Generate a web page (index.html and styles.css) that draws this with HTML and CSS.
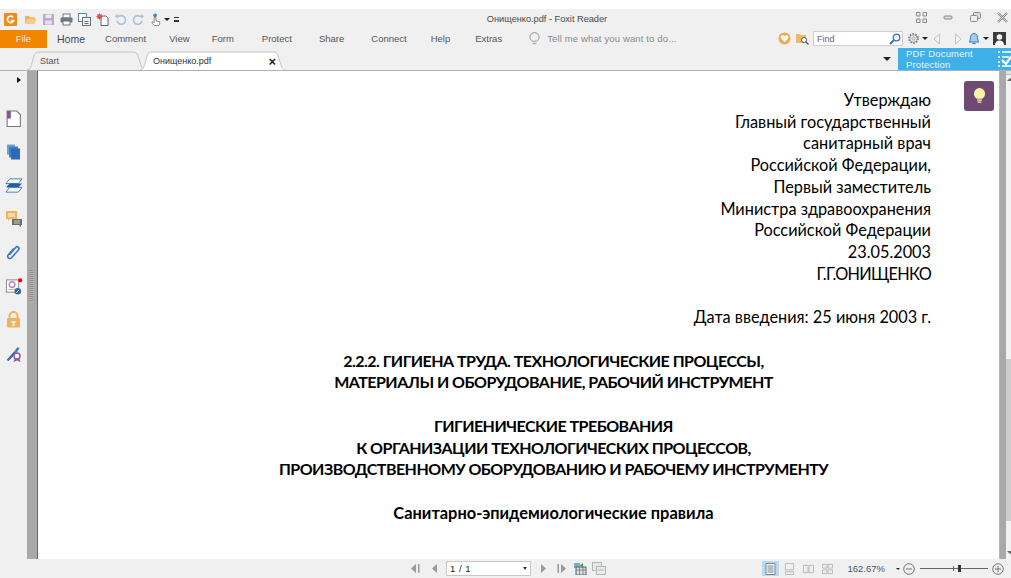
FILE: index.html
```html
<!DOCTYPE html>
<html lang="ru">
<head>
<meta charset="utf-8">
<title>Онищенко.pdf - Foxit Reader</title>
<link rel="stylesheet" href="styles.css">
</head>
<body>
<div class="app">
  <header class="chrome">
    <div class="titlebar">
      <div class="quick">
        <svg class="qi logo" viewBox="0 0 13 13"><rect width="13" height="13" rx="1" fill="#f08a1d"/><path d="M9 4.200A3.200 3.200 0 1 0 9.600 7.600H6.800" fill="none" stroke="#fff" stroke-width="1.700"/></svg>
        <svg class="qi" viewBox="0 0 13 13"><path d="M1 3h4l1 1.500h5V6H3.500L1 11z" fill="#e9b25e"/><path d="M1 11l2.500-5H13l-2.500 5z" fill="#f6cd8a"/></svg>
        <svg class="qi" viewBox="0 0 13 13"><path d="M1 1h11v11H1z" fill="#bfa6cf"/><rect x="3.500" y="1.500" width="6" height="3.500" fill="#efe8f3"/><rect x="3" y="7.500" width="7" height="4" fill="#e6dcec"/></svg>
        <svg class="qi" viewBox="0 0 13 13"><rect x="3" y="1" width="7" height="4" fill="#fff" stroke="#667" stroke-width=".9"/><rect x=".5" y="4.500" width="12" height="5" rx="1" fill="#6d7a88"/><rect x="3" y="8" width="7" height="4" fill="#fff" stroke="#667" stroke-width=".9"/></svg>
        <svg class="qi" viewBox="0 0 13 13"><rect x=".5" y=".5" width="8" height="8" fill="#fff" stroke="#5a87b5"/><rect x="4.500" y="4.500" width="8" height="8" fill="#eef2f6" stroke="#66707a"/><path d="M6.500 8.500h4M6.500 10.500h4" stroke="#66707a"/></svg>
        <svg class="qi" viewBox="0 0 13 13"><path d="M5 3h5l2 2v7.500H5z" fill="#fff" stroke="#555" stroke-width=".9"/><circle cx="3.500" cy="3.500" r="2.300" fill="#d9342b"/><path d="M3.500 0v7M0 3.500h7M1 1l5 5M6 1L1 6" stroke="#e0584f" stroke-width=".6"/></svg>
        <svg class="qi" viewBox="0 0 13 13"><path d="M3 7.500A4.300 4.300 0 1 0 5 3.300H1.500" fill="none" stroke="#a9c3de" stroke-width="1.700"/><path d="M3.500 .8L1 3.300l2.500 2.500z" fill="#a9c3de"/></svg>
        <svg class="qi" viewBox="0 0 13 13"><path d="M10 7.500A4.300 4.300 0 1 1 8 3.300h3.500" fill="none" stroke="#a9c3de" stroke-width="1.700"/><path d="M9.500 .8L12 3.300 9.500 5.800z" fill="#a9c3de"/></svg>
        <svg class="qi" viewBox="0 0 13 14"><circle cx="5" cy="2.500" r="2" fill="#4b83bd"/><path d="M4 5h2v3.500l4 1v2.500l-1 1.500H4L1.500 10l1.500-.5L4 10.500z" fill="#fff" stroke="#666" stroke-width=".8"/></svg>
        <span class="caret hand-caret"></span>
        <span class="more"></span>
      </div>
      <div class="doc-title">Онищенко.pdf - Foxit Reader</div>
      <div class="win-ctl">
        <svg class="wi" viewBox="0 0 11 11"><path d="M.5.500h3.500v3.500H.5zM7 .5h3.500v3.500H7zM.5 7h3.500v3.500H.5zM7 7h3.500v3.500H7z" fill="#eee" stroke="#888"/></svg>
        <svg class="wi" viewBox="0 0 11 11"><rect x="1" y="4" width="8" height="3" rx="1" fill="#ddd" stroke="#888"/></svg>
        <svg class="wi" viewBox="0 0 11 11"><rect x="3.500" y=".5" width="7" height="6" rx="1" fill="#ddd" stroke="#888"/><rect x=".5" y="3.500" width="7" height="6" rx="1" fill="#eee" stroke="#888"/></svg>
        <svg class="wi" viewBox="0 0 11 11"><path d="M1 1l9 9M10 1l-9 9" stroke="#888" stroke-width="2.200"/><path d="M1 1l9 9M10 1l-9 9" stroke="#eee" stroke-width=".7"/></svg>
      </div>
    </div>
    <div class="ribbon">
      <nav class="menu">
        <span class="file">File</span>
        <span class="m home">Home</span>
        <span class="m comment">Comment</span>
        <span class="m view">View</span>
        <span class="m form">Form</span>
        <span class="m protect">Protect</span>
        <span class="m share">Share</span>
        <span class="m connect">Connect</span>
        <span class="m help">Help</span>
        <span class="m extras">Extras</span>
        <span class="tell">
          <svg class="bulb" viewBox="0 0 12 15"><path d="M3.500 10C2 8.500 1 7.500 1 5.500a5 5 0 0 1 10 0c0 2-1 3-2.500 4.500zM4 12.500h4" fill="none" stroke="#8d8d8d"/></svg>
          Tell me what you want to do...
        </span>
      </nav>
      <div class="tools">
        <svg class="ti heart" viewBox="0 0 13 13"><circle cx="6.500" cy="6.500" r="6" fill="#eeaa55"/><path d="M6.500 10L3 6.500a2 2 0 0 1 3.500-2.300A2 2 0 0 1 10 6.500z" fill="#fff"/></svg>
        <svg class="ti" viewBox="0 0 13 13"><path d="M0 2h4l1 1h5v8H0z" fill="#edb96b"/><circle cx="8" cy="8" r="2.500" fill="#fff" stroke="#555"/><path d="M10 10l2.500 2.500" stroke="#555" stroke-width="1.300"/></svg>
        <div class="find">
          <span>Find</span>
          <svg class="lens" viewBox="0 0 12 12"><circle cx="7.500" cy="4.500" r="3.300" fill="none" stroke="#2f76bd" stroke-width="1.300"/><path d="M5 7L1 11" stroke="#2f76bd" stroke-width="1.800"/></svg>
        </div>
        <svg class="ti gear" viewBox="0 0 13 13"><circle cx="6.500" cy="6.500" r="4.500" fill="none" stroke="#808080" stroke-width="1.800" stroke-dasharray="1.600 1.200"/><circle cx="6.500" cy="6.500" r="3.700" fill="none" stroke="#909090" stroke-width=".7"/><circle cx="6.500" cy="6.500" r="1.600" fill="none" stroke="#909090" stroke-width=".8"/></svg>
        <span class="caret"></span>
        <svg class="ti back" viewBox="0 0 8 12"><path d="M6.500 1L1 6l5.500 5z" fill="#f3f3f3" stroke="#c2c2c2"/></svg>
        <svg class="ti fwd" viewBox="0 0 8 12"><path d="M1.500 1L7 6l-5.500 5z" fill="#f3f3f3" stroke="#c2c2c2"/></svg>
        <svg class="ti bell" viewBox="0 0 12 13"><path d="M1 10c1-1 1.500-2 1.500-4.500C2.500 3 4 1.500 6 1.500S9.500 3 9.500 5.500C9.500 8 10 9 11 10z" fill="#a6cdf0" stroke="#2f7fc8"/><path d="M4.500 11.500h3" stroke="#2f7fc8" stroke-width="1.200"/></svg>
        <span class="caret"></span>
        <svg class="ti user" viewBox="0 0 13 13"><rect width="13" height="13" fill="#3a3a3a"/><circle cx="6.500" cy="5" r="2.800" fill="#fff"/><path d="M2 13c0-3 2-4.500 4.500-4.500S11 10 11 13z" fill="#fff"/></svg>
      </div>
    </div>
    <div class="tabrow">
      <div class="tabs">
        <div class="tab start">
          <svg class="tab-shape" viewBox="0 0 118 18" preserveAspectRatio="none"><path d="M0 18C3 18 4 15 5 11L7 4C8 1 9 0 12 0H106C109 0 110 1 111 4L114 13C115 16 116 18 118 18" fill="#f0f0f0" stroke="#c4c4c4"/></svg>
          <span>Start</span>
        </div>
        <div class="tab active">
          <svg class="tab-shape" viewBox="0 0 145 18" preserveAspectRatio="none"><path d="M0 18C3 18 4 15 5 11L7 4C8 1 9 0 12 0H133C136 0 137 1 138 4L141 13C142 16 143 18 145 18" fill="#fff" stroke="#c4c4c4"/></svg>
          <span>Онищенко.pdf</span><b class="close">×</b>
        </div>
      </div>
      <div class="tab-right">
        <span class="tab-list"></span>
        <div class="promo">
          <span>PDF Document<br>Protection</span>
          <svg class="promo-ic" viewBox="0 0 17 18"><path d="M1 2h2M5 2h11M1 7h2M1 12h2M1 16h2M5 16h11" stroke="#fff" stroke-width="1.500"/><path d="M5 7h7M5 12h3" stroke="#fff" stroke-width="1.500"/><path d="M5 10l4 4 7-10" fill="none" stroke="#fff" stroke-width="2.200"/></svg>
        </div>
      </div>
    </div>
  </header>

  <div class="workspace">
    <aside class="sidebar">
      <span class="expand"></span>
      <svg class="si" viewBox="0 0 14 16"><path d="M1 1h9l3.500 3.500V15.500H1z" fill="#fff" stroke="#777"/><rect x="1" y="1" width="3.500" height="7" fill="#8a4fa3"/></svg>
      <svg class="si" viewBox="0 0 15 16"><rect x="1" y="1" width="8" height="10" fill="#6ea1d8"/><rect x="3" y="3" width="9" height="11" fill="#3f80c8"/><rect x="5" y="5" width="9" height="11" fill="#2a6cb5"/></svg>
      <svg class="si wide" viewBox="0 0 19 16"><path d="M5 1h13l-4 5H1z" fill="#fff" stroke="#3b78bd"/><path d="M5 6h13l-4 4H1z" fill="#1f5fa8"/><path d="M5 10h13l-4 5H1z" fill="#fff" stroke="#3b78bd"/></svg>
      <svg class="si wide" viewBox="0 0 18 17"><path d="M1 1h11v8H5l-2 2V9H1z" fill="#efb45c"/><path d="M3 4h7M3 6h7" stroke="#fff"/><path d="M7 9h10v6h-1v2l-2-2H7z" fill="#6d6d6d"/><path d="M9 11h6M9 13h6" stroke="#ccc"/></svg>
      <svg class="si" viewBox="0 0 16 17"><path d="M4 10.500L10.500 3c1.500-1.800 4.500.5 3 2.500L6 14c-1.500 1.800-5 .5-4-2.500L8.500 4" fill="none" stroke="#3b7bc0" stroke-width="1.700"/></svg>
      <svg class="si wide" viewBox="0 0 18 18"><rect x="1" y="2" width="13" height="13" fill="#fff" stroke="#888"/><circle cx="7" cy="7" r="3" fill="none" stroke="#a98bb9" stroke-width="1.500"/><path d="M3 12h8" stroke="#aaa"/><circle cx="15.500" cy="2.500" r="2.200" fill="#f00"/><circle cx="13" cy="14" r="3.500" fill="#2e6ca8"/><path d="M11.500 15.500l3-3" stroke="#fff"/></svg>
      <svg class="si" viewBox="0 0 14 17"><path d="M3 8V5a4 4 0 0 1 8 0v3" fill="none" stroke="#eeb35f" stroke-width="2"/><rect x="0.500" y="7" width="13" height="9.500" rx="1" fill="#eeb35f"/><path d="M5 11h4M7 11v4" stroke="#fff" stroke-width="1.600"/></svg>
      <svg class="si wide" viewBox="0 0 17 17"><path d="M1 15L9 6l2 2-8 8z" fill="#2c6fb3"/><path d="M9 6l3-4 2 1.500-3 4.500" fill="#3e83c6"/><circle cx="11.500" cy="11" r="3" fill="#fff" stroke="#94559f" stroke-width="1.500"/><path d="M9 14l-1 3 3.500-1.500L15 17l-1-3" fill="#94559f"/></svg>
    </aside>
    <div class="gutter left"><span class="grip"></span></div>
    <main class="page">
      <div class="approval">
        <p>Утверждаю</p>
        <p>Главный государственный</p>
        <p>санитарный врач</p>
        <p>Российской Федерации,</p>
        <p>Первый заместитель</p>
        <p>Министра здравоохранения</p>
        <p>Российской Федерации</p>
        <p>23.05.2003</p>
        <p class="caps">Г.Г.ОНИЩЕНКО</p>
        <p class="spacer">&nbsp;</p>
        <p>Дата введения: 25 июня 2003 г.</p>
      </div>
      <div class="heading">
        <p>2.2.2. ГИГИЕНА ТРУДА. ТЕХНОЛОГИЧЕСКИЕ ПРОЦЕССЫ,</p>
        <p>МАТЕРИАЛЫ И ОБОРУДОВАНИЕ, РАБОЧИЙ ИНСТРУМЕНТ</p>
        <p class="spacer">&nbsp;</p>
        <p>ГИГИЕНИЧЕСКИЕ ТРЕБОВАНИЯ</p>
        <p>К ОРГАНИЗАЦИИ ТЕХНОЛОГИЧЕСКИХ ПРОЦЕССОВ,</p>
        <p>ПРОИЗВОДСТВЕННОМУ ОБОРУДОВАНИЮ И РАБОЧЕМУ ИНСТРУМЕНТУ</p>
        <p class="spacer">&nbsp;</p>
        <p class="subject">Санитарно-эпидемиологические правила</p>
      </div>
      <div class="tip">
        <svg viewBox="0 0 14 18"><path d="M4 12C2.500 10.500 1 9 1 6.500a6 6 0 0 1 12 0C13 9 11.500 10.500 10 12z" fill="#fdf3a8"/><path d="M4.500 13.500h5M5 15.500h4" stroke="#fdf3a8" stroke-width="1.400"/></svg>
      </div>
    </main>
    <div class="gutter right"></div>
    <div class="scrollbar">
      <span class="sb-btn"></span>
      <span class="sb-up"></span>
      <span class="sb-thumb"></span>
      <span class="sb-down"></span>
    </div>
  </div>

  <footer class="status">
    <div class="pager">
      <svg class="pi" viewBox="0 0 12 11"><path d="M6 1L1 5.500 6 10zM8 1h1.500v9H8z" fill="#9a9a9a"/></svg>
      <svg class="pi" viewBox="0 0 12 11"><path d="M8 1L3 5.500 8 10z" fill="#9a9a9a"/></svg>
      <div class="pagebox"><span>1 / 1</span><i class="box-caret"></i></div>
      <svg class="pi" viewBox="0 0 12 11"><path d="M4 1l5 4.500L4 10z" fill="#9a9a9a"/></svg>
      <svg class="pi" viewBox="0 0 12 11"><path d="M1.500 1H3v9H1.500zM5 1l5 4.500L5 10z" fill="#9a9a9a"/></svg>
      <svg class="pi big" viewBox="0 0 14 13"><rect x="1" y="1" width="6" height="5" fill="#7ea8d0"/><rect x="3" y="5" width="10" height="8" fill="#d5d9dd" stroke="#5a6570"/><path d="M3 8h10M6.500 5v8M10 5v8" stroke="#5a6570" stroke-width=".6"/><path d="M10 1L7 3.500 10 6z" fill="#3a9a5a"/></svg>
      <svg class="pi big" viewBox="0 0 14 13"><rect x=".5" y=".5" width="9" height="8" fill="#e8e8e8" stroke="#b5b5b5"/><rect x="4.500" y="4.500" width="9" height="8" fill="#e4ecec" stroke="#b5b5b5"/><path d="M6 8h6" stroke="#8fc4a4"/></svg>
    </div>
    <div class="viewer">
      <span class="vm on"><svg viewBox="0 0 10 12"><path d="M.5.500h9v11h-9zM2 3h6M2 5h6M2 7h6M2 9h6" fill="#f4f6f8" stroke="#7f8790"/></svg></span>
      <span class="vm"><svg viewBox="0 0 10 13"><path d="M.5.500h9v7h-9zM.5 9.500h9v3h-9z" fill="none" stroke="#b6b6b6"/></svg></span>
      <span class="vm"><svg viewBox="0 0 12 11"><path d="M.5 1.500h5v8h-5zM6.500 1.500h5v8h-5z" fill="#eee" stroke="#b6b6b6"/></svg></span>
      <span class="vm"><svg viewBox="0 0 12 13"><path d="M.5 1.500h5v4h-5zM6.500 1.500h5v4h-5zM.5 7.500h5v4h-5zM6.500 7.500h5v4h-5z" fill="none" stroke="#b6b6b6"/></svg></span>
      <span class="zoom-val">162.67%</span>
      <span class="caret small"></span>
      <svg class="zb" viewBox="0 0 12 12"><circle cx="6" cy="6" r="5.300" fill="none" stroke="#777"/><path d="M3 6h6" stroke="#777"/></svg>
      <div class="slider"><i class="tick"></i><i class="knob"></i></div>
      <svg class="zb" viewBox="0 0 12 12"><circle cx="6" cy="6" r="5.300" fill="none" stroke="#777"/><path d="M3 6h6M6 3v6" stroke="#777"/></svg>
    </div>
  </footer>
</div>
</body>
</html>
```
FILE: styles.css
```css
* { box-sizing: border-box; }

html, body { margin: 0; height: 100%; background: #fff; overflow: hidden; }

body { font-family: "Open Sans", "Noto Sans", sans-serif; color: #000; }

.app {
  display: flex;
  flex-direction: column;
  height: 578px;
  padding-top: 9px;
}

/* ---------- window chrome ---------- */
.chrome {
  flex: none;
  height: 62px;
  background: #f0f0f0;
  border-bottom: 1px solid #b0b0b0;
  display: flex;
  flex-direction: column;
}

.titlebar {
  flex: none;
  height: 20px;
  display: grid;
  grid-template-columns: 1fr auto 1fr;
  align-items: center;
  padding-left: 4px;
}

.quick { display: flex; align-items: center; gap: 5px; }
.qi { width: 13px; height: 13px; flex: none; }
.logo { margin-right: 2px; }
.caret {
  width: 0; height: 0; flex: none;
  border-left: 3px solid transparent;
  border-right: 3px solid transparent;
  border-top: 3px solid #222;
}
.hand-caret { margin-left: -4px; }
.more {
  width: 5px; height: 5px; margin-left: -1px;
  border-top: 1px solid #333;
  background: linear-gradient(#333, #333) center 2px / 5px 2px no-repeat;
}

.doc-title {
  font-family: "Liberation Sans", sans-serif;
  font-size: 9.200px;
  color: #4a4a4a;
  margin: -1px 0 0 79px;
}

.win-ctl { display: flex; justify-content: flex-end; gap: 16px; padding-right: 3px; margin-top: -4px; }
.wi { width: 11px; height: 11px; flex: none; }

.ribbon {
  flex: none;
  height: 19px;
  display: flex;
  justify-content: space-between;
  position: relative;
}

.menu {
  display: flex;
  align-items: center;
  font-family: "Liberation Sans", sans-serif;
  font-size: 9.500px;
  color: #555;
}

.file {
  width: 47px; height: 18px;
  background: #f28500;
  color: #fbe5c8;
  display: flex; align-items: center; justify-content: center;
}
.m { flex: none; }
.home { margin-left: 10px; font-size: 10.500px; color: #3b4a5a; }
.comment { margin-left: 20px; }
.view { margin-left: 23px; }
.form { margin-left: 22px; }
.protect { margin-left: 28px; }
.share { margin-left: 27px; }
.connect { margin-left: 27px; }
.help { margin-left: 24px; }
.extras { margin-left: 25px; }

.tell { display: flex; align-items: center; gap: 7px; margin-left: 27px; color: #8a8a8a; letter-spacing: .14px; }
.bulb { width: 11px; height: 14px; }

.tools { display: flex; align-items: center; padding-right: 5px; }
.ti { width: 13px; height: 13px; flex: none; }
.heart { margin-right: 5px; }

.find {
  width: 90px; height: 15px;
  margin-left: 4px;
  background: #fff;
  border: 1px solid #cfcfcf;
  display: flex; align-items: center; justify-content: space-between;
  padding: 0 1px 0 3px;
  font-family: "Liberation Sans", sans-serif;
  font-size: 9px;
  color: #666;
}
.lens { width: 12px; height: 12px; }

.gear { margin-left: 4px; margin-right: 2px; }
.back { width: 8px; height: 12px; margin-left: 5px; }
.fwd { width: 8px; height: 12px; margin-left: 13px; }
.bell { width: 12px; margin-left: 6px; margin-right: 3px; }
.user { margin-left: 4px; }

.tabrow {
  flex: 1;
  display: flex;
  justify-content: space-between;
  min-height: 0;
}

.tabs { display: flex; align-items: flex-end; padding-left: 27px; }

.tab {
  height: 18px;
  font-family: "Liberation Sans", sans-serif;
  font-size: 9px;
  color: #555;
  display: flex;
  align-items: center;
  position: relative;
}
.tab > span, .tab > b { position: relative; }
.tab-shape {
  position: absolute;
  inset: 0;
  width: 100%;
  height: 100%;
  overflow: visible;
}
.start { width: 118px; padding-left: 13px; }
.active {
  width: 145px;
  margin-left: -5px;
  padding: 0 9px 0 13px;
  color: #333;
  justify-content: space-between;
}
.close { font-size: 13px; line-height: 1; color: #222; font-weight: 700; }

.tab-right { display: flex; align-items: stretch; }
.tab-list {
  align-self: center;
  margin-right: 7px;
  width: 0; height: 0;
  border-left: 4px solid transparent;
  border-right: 4px solid transparent;
  border-top: 4px solid #222;
}
.promo {
  width: 113px;
  background: #3fb0e8;
  color: #e8f6fd;
  font-family: "Liberation Sans", sans-serif;
  font-size: 9.500px;
  line-height: 10.500px;
  letter-spacing: .16px;
  padding: 1px 0 0 8px;
  display: flex;
  justify-content: space-between;
  overflow: hidden;
}
.promo-ic { width: 17px; height: 18px; margin: 1px -3px 0 0; }

/* ---------- document area ---------- */
.workspace { flex: 1; display: flex; min-height: 0; }

.sidebar {
  flex: none;
  width: 27px;
  background: #f0f0f0;
  display: flex;
  flex-direction: column;
  align-items: center;
  gap: 16.600px;
  padding-top: 6px;
}
.expand {
  width: 0; height: 0;
  margin-left: 11px;
  margin-bottom: 10px;
  border-top: 3.500px solid transparent;
  border-bottom: 3.500px solid transparent;
  border-left: 4px solid #111;
}
.si { width: 15px; height: 17px; flex: none; }
.si.wide { width: 18px; }

.gutter { flex: none; width: 10px; background: #a9a9a9; }
.gutter.left {
  border-right: 1px solid #666;
  width: 11px;
  display: flex;
  align-items: center;
}
.grip {
  width: 4px; height: 32px;
  margin: -58px 0 0 2px;
  background: repeating-linear-gradient(#8f8f8f 0 1px, #b5b5b5 1px 2px);
}
.gutter.right { width: 7px; border-left: 1px solid #b8b8b8; }

.page {
  flex: 1;
  min-width: 0;
  background: #fff;
  position: relative;
  overflow: hidden;
  font-family: "Lato", "Open Sans", sans-serif;
  font-size: 16.300px;
  line-height: 21.700px;
  padding-top: 18px;
}
.page p { margin: 0; white-space: nowrap; }
.page .caps { letter-spacing: -.7px; }

.approval { text-align: right; padding-right: 68px; }
.heading {
  text-align: center;
  font-weight: 700;
  font-size: 16px;
  letter-spacing: -.52px;
  margin-top: 22px;
  padding-left: 70px;
}
.page .subject { font-size: 16.400px; letter-spacing: 0; }

.tip {
  position: absolute;
  top: 10px; right: 5px;
  width: 30px; height: 30px;
  border-radius: 3px;
  background: #6f4a73;
  display: flex; align-items: center; justify-content: center;
}
.tip svg { width: 13px; height: 18px; }

.scrollbar {
  flex: none;
  width: 5px;
  background: #f2f2f2;
  position: relative;
}
.sb-btn { display: block; height: 4px; background: #e2e2e2; border-bottom: 1px solid #bbb; }
.sb-up { display: block; margin: 3px 0 0 1px; width: 0; height: 0; border-left: 3px solid transparent; border-right: 3px solid transparent; border-bottom: 3px solid #666; }
.sb-thumb { position: absolute; top: 288px; bottom: 38px; left: 0; right: 0; background: #cdcdcd; }
.sb-down { position: absolute; bottom: 5px; left: 1px; width: 0; height: 0; border-left: 3px solid transparent; border-right: 3px solid transparent; border-top: 3px solid #666; }

/* ---------- status bar ---------- */
.status {
  flex: none;
  height: 19px;
  background: #f0f0f0;
  display: flex;
  align-items: center;
  position: relative;
  justify-content: flex-end;
  padding-right: 7px;
}

.pager {
  position: absolute;
  left: 410px; top: 0; bottom: 0;
  display: flex;
  align-items: center;
  gap: 7px;
}
.pi { width: 12px; height: 11px; flex: none; }
.pi.big { width: 14px; height: 13px; margin-left: -2px; }
.pagebox {
  width: 85px; height: 15px;
  margin: 0 -1px 0 -2px;
  background: #fff;
  border: 1px solid #c8c8c8;
  font-family: "Liberation Sans", sans-serif;
  font-size: 9.500px;
  color: #222;
  word-spacing: 1px;
  display: flex; align-items: center; justify-content: space-between;
  padding: 0 3px;
}
.box-caret { width: 0; height: 0; border-left: 2.500px solid transparent; border-right: 2.500px solid transparent; border-top: 3px solid #333; }

.viewer { display: flex; align-items: center; }
.vm {
  width: 17px; height: 15px;
  margin-right: 2px;
  display: flex; align-items: center; justify-content: center;
}
.vm svg { width: 11px; height: 12px; }
.vm.on { background: #bcd7f2; }
.zoom-val {
  font-family: "Liberation Sans", sans-serif;
  font-size: 9.500px;
  color: #4a5060;
  margin: 0 11px 0 9px;
}
.caret.small { border-width: 2.500px 2.500px 0; margin-right: 3px; }
.zb { width: 12px; height: 12px; flex: none; }
.slider {
  width: 68px; height: 1px;
  margin: 0 4px 0 5px;
  background: #666;
  position: relative;
}
.tick { position: absolute; left: 33px; top: -2px; width: 1px; height: 5px; background: #666; }
.knob { position: absolute; left: 38px; top: -3px; width: 3px; height: 7px; background: #333; }
```
